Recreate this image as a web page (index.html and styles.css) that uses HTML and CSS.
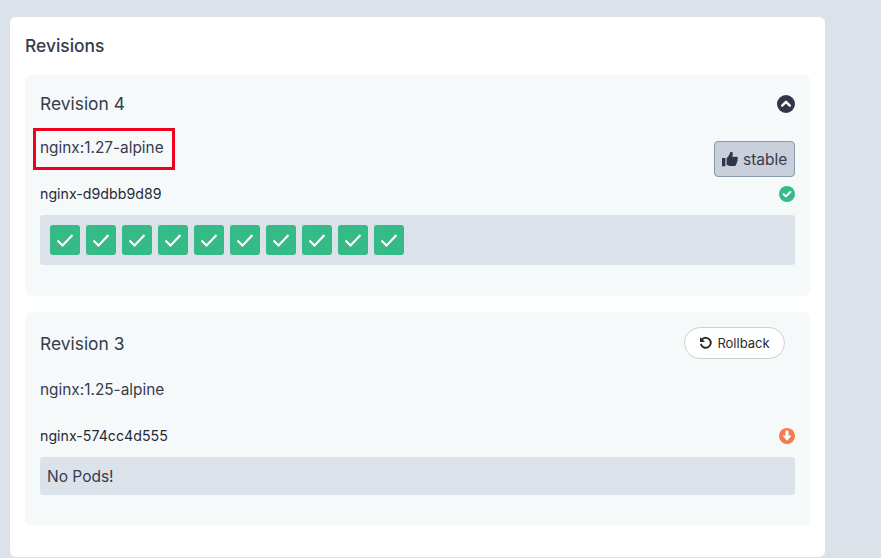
FILE: index.html
```html
<!DOCTYPE html>
<html lang="en">
<head>
    <meta charset="UTF-8">
    <meta name="viewport" content="width=device-width, initial-scale=1.0">
    <title>Revisions</title>
    <link rel="stylesheet" href="styles.css">
</head>
<body>

    <div class="card">
        <h2 class="card-title">Revisions</h2>

        <!-- Revision 4 -->
        <div class="revision revision-current">
            <div class="revision-head">
                <h3>Revision 4</h3>
                <span class="toggle">
                    <svg viewBox="0 0 18 18" width="18" height="18"><circle cx="9" cy="9" r="9" fill="#323648"/><path d="M5.200 10.600 9 6.800l3.800 3.800" fill="none" stroke="#fff" stroke-width="2.400" stroke-linecap="round" stroke-linejoin="round"/></svg>
                </span>
            </div>
            <div class="image-row">
                <div class="image-name">nginx:1.27-alpine<span class="highlight"></span></div>
                <span class="stable-tag">
                    <svg viewBox="0 0 16 16" width="16" height="16"><path fill="#323648" d="M0 7h3.400v8.200H0zM4.600 7.200c1.500-1.200 2.700-2.900 3.200-4.600.2-.8.4-1.800 1.400-1.800 1.300 0 1.800 1.300 1.600 2.600-.1.800-.5 1.600-.8 2.300h4.300c1 0 1.700.7 1.700 1.500 0 .6-.3 1-.7 1.300.3.300.4.700.4 1.100 0 .6-.4 1.100-.9 1.300.1.200.2.500.2.800 0 .6-.4 1.100-1 1.300.1.200.1.400.1.600 0 .9-.8 1.500-1.700 1.500H9.500c-1.900 0-3.500-.6-4.900-1.300z"/></svg>
                    stable
                </span>
            </div>
            <div class="rs-row">
                <span class="rs-name">nginx-d9dbb9d89</span>
                <svg viewBox="0 0 16 16" width="16" height="16"><circle cx="8" cy="8" r="8" fill="#35bb87"/><path d="m4.600 8.200 2.300 2.200 4.400-4.400" fill="none" stroke="#fff" stroke-width="2" stroke-linecap="round" stroke-linejoin="round"/></svg>
            </div>
            <div class="pods">
                <div class="pod"><svg viewBox="0 0 30 30" width="30" height="30"><path d="m7.500 15.500 5 5 10-10.500"/></svg></div>
                <div class="pod"><svg viewBox="0 0 30 30" width="30" height="30"><path d="m7.500 15.500 5 5 10-10.500"/></svg></div>
                <div class="pod"><svg viewBox="0 0 30 30" width="30" height="30"><path d="m7.500 15.500 5 5 10-10.500"/></svg></div>
                <div class="pod"><svg viewBox="0 0 30 30" width="30" height="30"><path d="m7.500 15.500 5 5 10-10.500"/></svg></div>
                <div class="pod"><svg viewBox="0 0 30 30" width="30" height="30"><path d="m7.500 15.500 5 5 10-10.500"/></svg></div>
                <div class="pod"><svg viewBox="0 0 30 30" width="30" height="30"><path d="m7.500 15.500 5 5 10-10.500"/></svg></div>
                <div class="pod"><svg viewBox="0 0 30 30" width="30" height="30"><path d="m7.500 15.500 5 5 10-10.500"/></svg></div>
                <div class="pod"><svg viewBox="0 0 30 30" width="30" height="30"><path d="m7.500 15.500 5 5 10-10.500"/></svg></div>
                <div class="pod"><svg viewBox="0 0 30 30" width="30" height="30"><path d="m7.500 15.500 5 5 10-10.500"/></svg></div>
                <div class="pod"><svg viewBox="0 0 30 30" width="30" height="30"><path d="m7.500 15.500 5 5 10-10.500"/></svg></div>
            </div>
        </div>

        <!-- Revision 3 -->
        <div class="revision revision-old">
            <div class="revision-head">
                <h3>Revision 3</h3>
                <button class="rollback">
                    <svg viewBox="0 0 14 14" width="14" height="14"><path d="M3.300 3.200A5 5 0 1 1 2.100 8.600" fill="none" stroke="#2b2b2b" stroke-width="1.900" stroke-linecap="round"/><path d="M1 1v5h5z" fill="#2b2b2b"/></svg>
                    Rollback
                </button>
            </div>
            <div class="image-name image-old">nginx:1.25-alpine</div>
            <div class="rs-row">
                <span class="rs-name">nginx-574cc4d555</span>
                <svg viewBox="0 0 16 16" width="16" height="16"><circle cx="8" cy="8" r="8" fill="#f47c50"/><path d="M8 3.800v5" stroke="#fff" stroke-width="3" stroke-linecap="round"/><path d="M4.300 8h7.400L8 12.200z" fill="#fff" stroke="#fff" stroke-width="1" stroke-linejoin="round"/></svg>
            </div>
            <div class="no-pods">No Pods!</div>
        </div>
    </div>

</body>
</html>
```

FILE: styles.css
```css
body {
    font-family: Inter, "Liberation Sans", sans-serif;
    background-color: #dbe2e9;
    color: #363b4e;
    margin: 0;
    height: 558px;
    overflow: hidden;
    padding: 17px 56px 0 10px;
    box-sizing: border-box;
}

.card {
    background-color: #fff;
    border-radius: 6px;
    height: 540px;
    padding: 15px;
    box-sizing: border-box;
}

.card-title {
    font-size: 17.400px;
    font-weight: 500;
    line-height: 28px;
    margin: 0 0 15px;
}

.revision {
    background-color: #f5f9fa;
    border-radius: 6px;
    padding: 15px;
    margin-bottom: 16px;
    box-sizing: border-box;
}

.revision-current {
    height: 221px;
}

.revision-old {
    height: 214px;
}

.revision-head {
    display: flex;
    justify-content: space-between;
    align-items: center;
    height: 28px;
}

.revision-old .revision-head {
    height: 32px;
    padding-right: 10px;
}

.revision-head h3 {
    font-size: 17.400px;
    font-weight: 400;
    line-height: 28px;
    margin: 0;
}

.revision-old h3 {
    padding-top: 2px;
}

.toggle {
    display: flex;
}

.image-row {
    display: flex;
    justify-content: space-between;
    align-items: flex-start;
    height: 68px;
    padding-top: 23px;
    box-sizing: border-box;
}

.image-name {
    position: relative;
    font-size: 15.400px;
    line-height: 24px;
    margin-top: -5px;
}

.image-old {
    margin-top: 19px;
}

.highlight {
    position: absolute;
    left: -7px;
    right: -11px;
    top: -8px;
    bottom: -10px;
    border: 3px solid #f0001e;
}

.stable-tag {
    display: flex;
    align-items: center;
    gap: 5px;
    font-size: 15.500px;
    height: 36px;
    width: 81px;
    padding-left: 7px;
    box-sizing: border-box;
    background-color: #c9d0dc;
    border: 1px solid #8899aa;
    border-radius: 4px;
}

.rs-row {
    display: flex;
    justify-content: space-between;
    align-items: center;
    height: 20px;
    font-size: 14.200px;
    color: #272a36;
    margin-top: -2px;
}

.rs-name {
    line-height: 18px;
}

.revision-old .rs-row {
    margin-top: 24px;
}

.pods {
    display: flex;
    gap: 6px;
    background-color: #dbe2e9;
    border-radius: 3px;
    padding: 10px;
    margin-top: 11px;
}

.pod {
    width: 30px;
    height: 30px;
    background-color: #35bb87;
    border-radius: 3px;
    display: flex;
}

.pod path {
    fill: none;
    stroke: #fff;
    stroke-width: 2;
}

.rollback {
    display: flex;
    align-items: center;
    gap: 4px;
    font-family: inherit;
    font-size: 13px;
    color: #2b2b2b;
    height: 32px;
    width: 101px;
    justify-content: center;
    background-color: #fff;
    border: 1px solid #d0d0d0;
    border-radius: 16px;
}

.no-pods {
    background-color: #dbe2e9;
    border-radius: 3px;
    font-size: 15.500px;
    line-height: 37px;
    padding: 1px 0 0 7px;
    margin-top: 11px;
}
```
